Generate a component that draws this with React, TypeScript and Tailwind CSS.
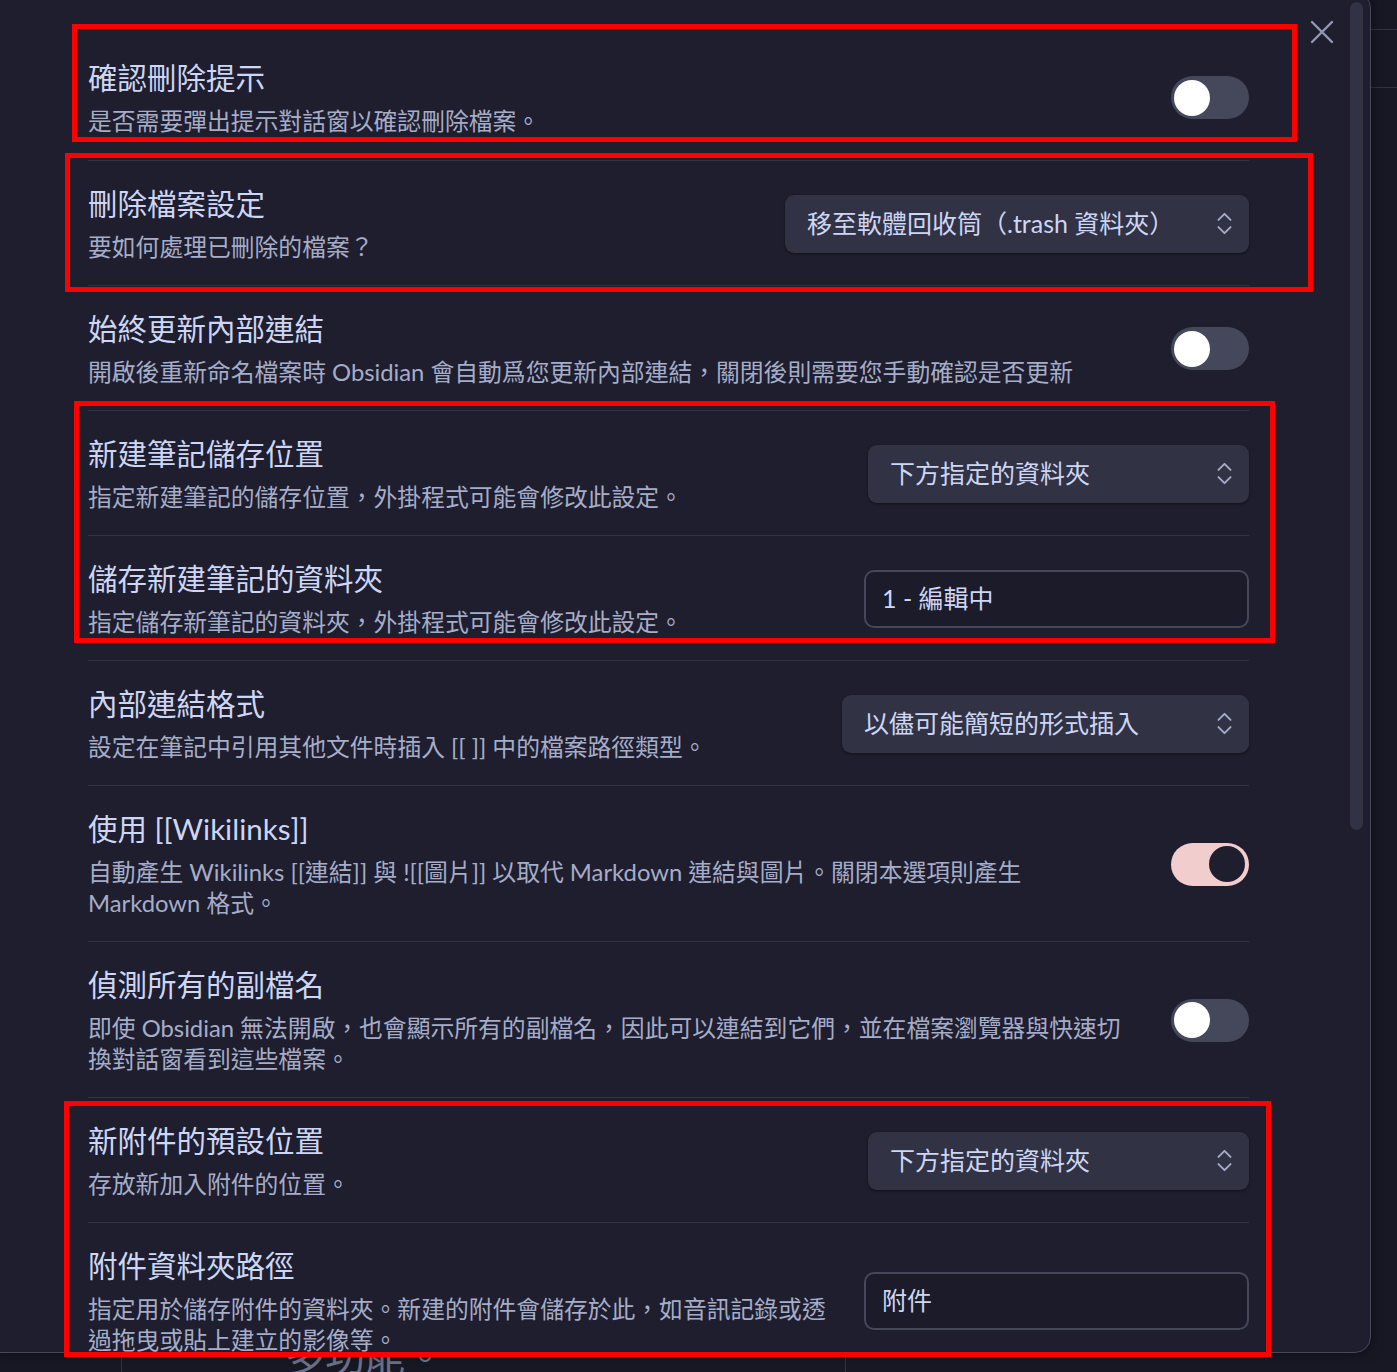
import { ChevronsUpDown } from "lucide-react";

type Control =
  | { kind: "toggle"; on?: boolean }
  | { kind: "select"; value: string; width: string }
  | { kind: "input"; value: string };

type Row = {
  title: string;
  desc: string[];
  control: Control;
};

const rows: Row[] = [
  {
    title: "確認刪除提示",
    desc: ["是否需要彈出提示對話窗以確認刪除檔案。"],
    control: { kind: "toggle" },
  },
  {
    title: "刪除檔案設定",
    desc: ["要如何處理已刪除的檔案？"],
    control: { kind: "select", value: "移至軟體回收筒（.trash 資料夾）", width: "w-[464px]" },
  },
  {
    title: "始終更新內部連結",
    desc: ["開啟後重新命名檔案時 Obsidian 會自動爲您更新內部連結，關閉後則需要您手動確認是否更新"],
    control: { kind: "toggle" },
  },
  {
    title: "新建筆記儲存位置",
    desc: ["指定新建筆記的儲存位置，外掛程式可能會修改此設定。"],
    control: { kind: "select", value: "下方指定的資料夾", width: "w-[381px]" },
  },
  {
    title: "儲存新建筆記的資料夾",
    desc: ["指定儲存新筆記的資料夾，外掛程式可能會修改此設定。"],
    control: { kind: "input", value: "1 - 編輯中" },
  },
  {
    title: "內部連結格式",
    desc: ["設定在筆記中引用其他文件時插入 [[ ]] 中的檔案路徑類型。"],
    control: { kind: "select", value: "以儘可能簡短的形式插入", width: "w-[407px]" },
  },
  {
    title: "使用 [[Wikilinks]]",
    desc: [
      "自動產生 Wikilinks [[連結]] 與 ![[圖片]] 以取代 Markdown 連結與圖片。關閉本選項則產生",
      "Markdown 格式。",
    ],
    control: { kind: "toggle", on: true },
  },
  {
    title: "偵測所有的副檔名",
    desc: [
      "即使 Obsidian 無法開啟，也會顯示所有的副檔名，因此可以連結到它們，並在檔案瀏覽器與快速切",
      "換對話窗看到這些檔案。",
    ],
    control: { kind: "toggle" },
  },
  {
    title: "新附件的預設位置",
    desc: ["存放新加入附件的位置。"],
    control: { kind: "select", value: "下方指定的資料夾", width: "w-[381px]" },
  },
  {
    title: "附件資料夾路徑",
    desc: ["指定用於儲存附件的資料夾。新建的附件會儲存於此，如音訊記錄或透", "過拖曳或貼上建立的影像等。"],
    control: { kind: "input", value: "附件" },
  },
];

function Toggle({ on }: { on?: boolean }) {
  return (
    <div
      className={
        on
          ? "flex h-[43px] w-[78px] items-center justify-end rounded-full bg-[#f2cdcd] px-[4px]"
          : "flex h-[43px] w-[78px] items-center justify-start rounded-full bg-[#45475a] px-[3px]"
      }
    >
      <div className={on ? "h-9 w-9 rounded-full bg-[#1e1e2e]" : "h-9 w-9 rounded-full bg-white"} />
    </div>
  );
}

function SettingControl({ control }: { control: Control }) {
  if (control.kind === "toggle") return <Toggle on={control.on} />;
  if (control.kind === "select")
    return (
      <div
        className={`${control.width} flex h-[58px] items-center justify-between rounded-[9px] bg-[#313244] pl-[22px] pr-[10px] text-[25px] text-[#cdd6f4] shadow-[0_1px_3px_rgba(0,0,0,0.45)]`}
      >
        <span className="whitespace-nowrap">{control.value}</span>
        <ChevronsUpDown size={29} strokeWidth={1.6} className="text-[#a6adc8]" />
      </div>
    );
  return (
    <div className="flex h-[58px] w-[385px] items-center rounded-[10px] border-2 border-[#45475a] bg-[#1b1b29] pl-[16px] text-[25px] text-[#cdd6f4]">
      {control.value}
    </div>
  );
}

function SettingRow({ row, first }: { row: Row; first: boolean }) {
  return (
    <div
      className={
        first
          ? "flex items-center pt-[23px] pb-[23px]"
          : "flex items-center border-t border-[#313244] pt-[23px] pb-[22px]"
      }
    >
      <div className="min-w-0 flex-1 pr-[16px]">
        <div className="whitespace-nowrap text-[29.5px] leading-[40px] text-[#cdd6f4]">{row.title}</div>
        <div className="mt-[8px] text-[23.8px] leading-[31px] text-[#a6adc8]">
          {row.desc.map((line) => (
            <div key={line} className="whitespace-nowrap">
              {line}
            </div>
          ))}
        </div>
      </div>
      <SettingControl control={row.control} />
    </div>
  );
}

export default function App() {
  return (
    <div
      className="relative h-[1372px] w-[1397px] overflow-hidden bg-[#181825]"
      style={{ fontFamily: 'Lato, "Noto Sans CJK TC", sans-serif' }}
    >
      {/* app behind the dialog */}
      <div className="flex h-full">
        <div className="w-[122px] border-r border-[#313244]" />
        <div className="w-[724px] border-r border-[#313244] pl-[163px] pt-[1332px]">
          <div className="whitespace-nowrap text-[40px] leading-[48px] text-[#6c7086]">多功能。</div>
        </div>
        <div className="flex-1">
          <div className="h-[30px] border-b border-[#313244]" />
          <div className="h-[58px] border-b border-[#313244]" />
        </div>
      </div>

      {/* settings dialog */}
      <div className="absolute left-[-20px] top-[-8px] h-[1361px] w-[1391px] overflow-hidden rounded-[16px] border border-[#45475a] bg-[#1e1e2e] shadow-[0_0_12px_rgba(0,0,0,0.5)]">
        <div className="w-[1268px] pl-[107px] pt-[42px]">
          {rows.map((row, i) => (
            <SettingRow key={row.title} row={row} first={i === 0} />
          ))}
        </div>

        <svg
          className="absolute left-[1329px] top-[27px]"
          width="24"
          height="24"
          viewBox="0 0 24 24"
          fill="none"
          stroke="#9399b2"
          strokeWidth="2.4"
          strokeLinecap="round"
        >
          <path d="M2 2 22 22M22 2 2 22" />
        </svg>

        <div className="absolute left-[1369px] top-[9px] h-[828px] w-[13px] rounded-full bg-[#313244]" />
      </div>

      {/* annotation boxes */}
      <div className="absolute left-[72px] top-[24px] h-[118px] w-[1225px] border-[5px] border-[#ff0000]" />
      <div className="absolute left-[65px] top-[153px] h-[139px] w-[1248px] border-[5px] border-[#ff0000]" />
      <div className="absolute left-[74px] top-[401px] h-[242px] w-[1201px] border-[5px] border-[#ff0000]" />
      <div className="absolute left-[64px] top-[1101px] h-[256px] w-[1207px] border-[5px] border-[#ff0000]" />
    </div>
  );
}
